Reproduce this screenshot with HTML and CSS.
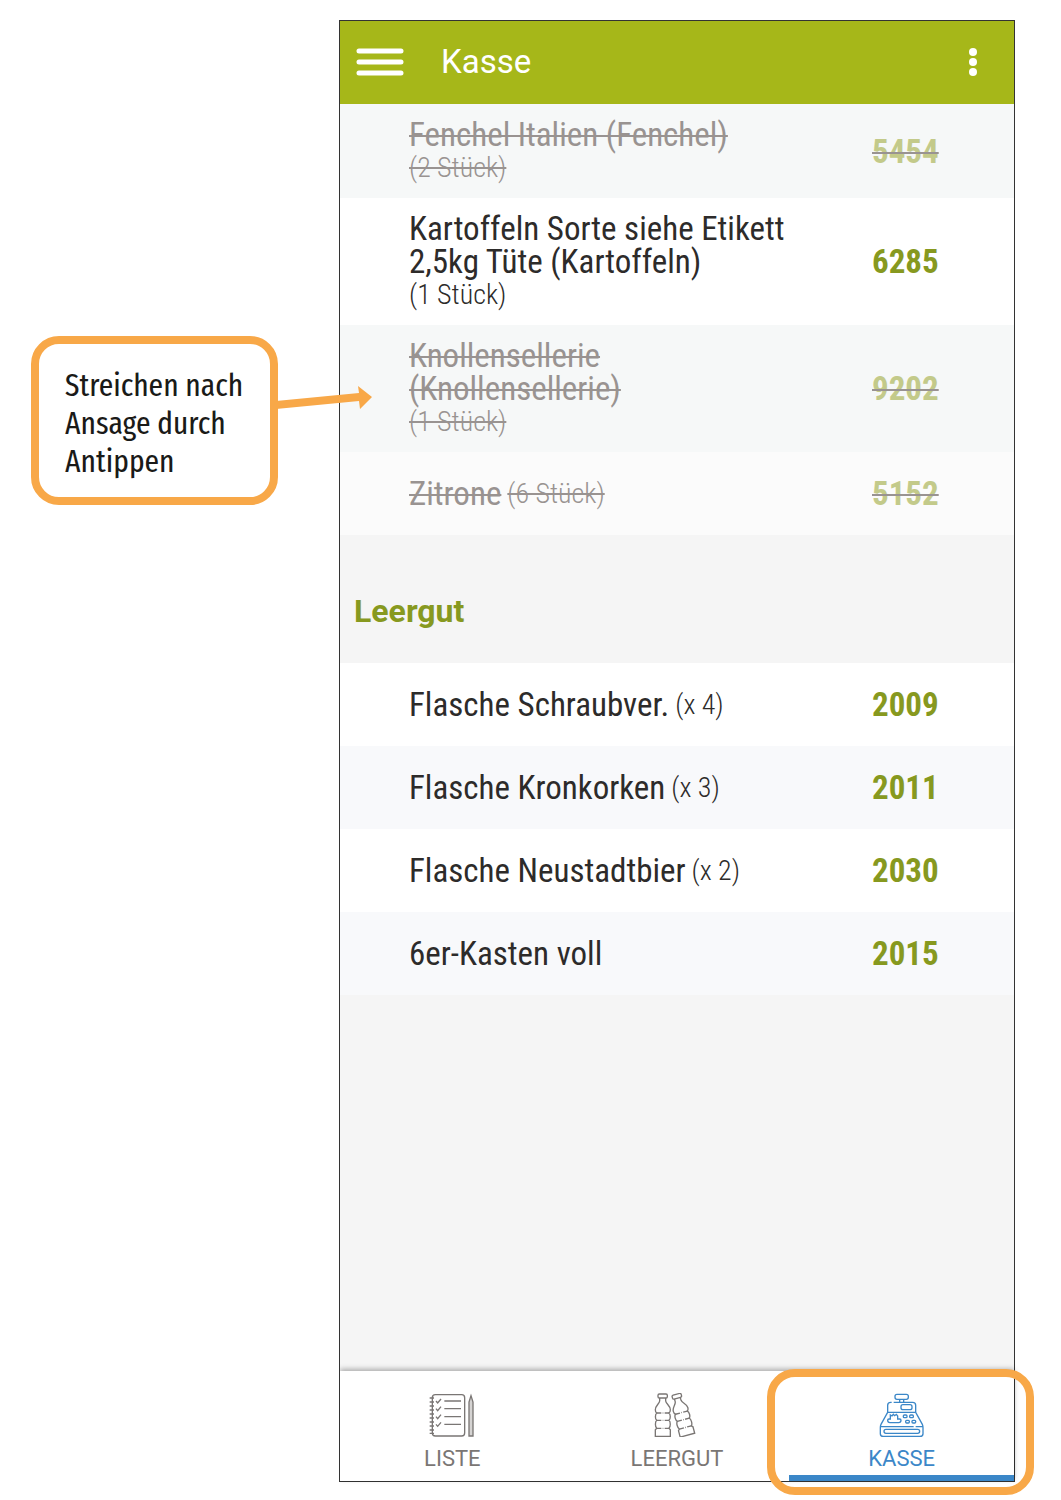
FILE: index.html
```html
<!DOCTYPE html>
<html lang="de">

<head>
    <meta charset="UTF-8">
    <meta name="viewport" content="width=device-width, initial-scale=1.0">
    <title>Kasse</title>
    <link rel="stylesheet" href="styles.css">
</head>

<body>

    <div class="page-container">

        <aside class="callout">
            Streichen nach Ansage durch Antippen
            <svg class="callout-arrow" viewBox="0 0 98 26" aria-hidden="true">
                <path d="M0 16 L83 8 L82 1 L96 12 L84 24 L83 16 L0 24 Z" />
            </svg>
        </aside>

        <div class="phone">
            <header class="app-bar">
                <button class="menu-button" type="button" aria-label="Menü">
                    <svg width="48" height="28" viewBox="0 0 48 28">
                        <path d="M3 3H45M3 14H45M3 25H45" />
                    </svg>
                </button>
                <h1>Kasse</h1>
                <button class="more-button" type="button" aria-label="Mehr">
                    <svg width="10" height="28" viewBox="0 0 10 28">
                        <circle cx="5" cy="4" r="4" />
                        <circle cx="5" cy="14" r="4" />
                        <circle cx="5" cy="24" r="4" />
                    </svg>
                </button>
            </header>

            <main class="content">
                <ul class="item-list">
                    <li class="item done">
                        <div class="item-text"><span>Fenchel Italien (Fenchel)</span> <small>(2 Stück)</small></div>
                        <span class="item-code">5454</span>
                    </li>
                    <li class="item">
                        <div class="item-text"><span>Kartoffeln Sorte siehe Etikett 2,5kg Tüte (Kartoffeln)</span> <small>(1 Stück)</small></div>
                        <span class="item-code">6285</span>
                    </li>
                    <li class="item done">
                        <div class="item-text"><span>Knollensellerie (Knollensellerie)</span> <small>(1 Stück)</small></div>
                        <span class="item-code">9202</span>
                    </li>
                    <li class="item done">
                        <div class="item-text"><span>Zitrone</span> <small>(6 Stück)</small></div>
                        <span class="item-code">5152</span>
                    </li>
                </ul>

                <h2>Leergut</h2>

                <ul class="item-list empties">
                    <li class="item">
                        <div class="item-text"><span>Flasche Schraubver.</span> <small>(x 4)</small></div>
                        <span class="item-code">2009</span>
                    </li>
                    <li class="item">
                        <div class="item-text"><span>Flasche Kronkorken</span> <small>(x 3)</small></div>
                        <span class="item-code">2011</span>
                    </li>
                    <li class="item">
                        <div class="item-text"><span>Flasche Neustadtbier</span> <small>(x 2)</small></div>
                        <span class="item-code">2030</span>
                    </li>
                    <li class="item">
                        <div class="item-text"><span>6er-Kasten voll</span></div>
                        <span class="item-code">2015</span>
                    </li>
                </ul>
            </main>

            <nav class="tab-bar">
                <a class="tab" href="#liste">
                    <svg viewBox="0 0 138 132" aria-hidden="true">
                        <rect x="10" y="5" width="97" height="124" rx="9" />
                        <path d="M2 15H15M2 27H15M2 39H15M2 51H15M2 63H15M2 75H15M2 87H15M2 99H15M2 111H15M2 121H15" />
                        <path d="M21 24L26 30L36 18M21 47L26 53L36 41M21 71L26 77L36 65M21 94L26 100L36 88" />
                        <path d="M46 24H96M46 47H96M46 71H96M46 94H96" />
                        <path class="pencil" d="M126 8L120 27V129H132V27Z" />
                    </svg>
                    LISTE
                </a>
                <a class="tab" href="#leergut">
                    <svg viewBox="0 0 138 132" aria-hidden="true">
                        <defs>
                            <g id="bottle">
                                <rect x="12" y="3" width="28" height="12" rx="4" />
                                <path d="M17 15V24C16 33 4 38 4 50C4 56 5 58 8 60C3 64 3 78 8 82C3 86 3 102 8 106L4 110V130H49V110L45 106C50 102 50 86 45 82C50 78 50 64 45 60C48 58 49 56 49 50C49 38 36 33 35 24V15" />
                                <path d="M8 60H22M26 60H28M32 60H45M8 82H22M26 82H28M32 82H45M8 106H22M26 106H28M32 106H45" />
                            </g>
                        </defs>
                        <use href="#bottle" />
                        <use href="#bottle" transform="translate(67 4) rotate(-15) translate(-26 -3)" />
                    </svg>
                    LEERGUT
                </a>
                <a class="tab active" href="#kasse">
                    <svg viewBox="0 0 138 132" aria-hidden="true">
                        <rect x="48" y="4" width="40" height="15" rx="6" />
                        <path d="M62 19V27M74 19V27" />
                        <path d="M38 28H35Q26 28 26 37V58L6 94Q4 98 4 104V122Q4 130 13 130H123Q132 130 132 122V104Q132 98 130 94L110 58V37Q110 28 101 28H44" />
                        <rect x="66" y="35" width="33" height="15" rx="6" />
                        <path d="M26 58H110M4 101H104M110 101H132" />
                        <path d="M34 78V66L39 69L43 64L47 68L52 64L56 69V78H62Q66 78 66 82Q66 89 59 89H33Q26 89 26 82Q26 78 30 78Z" />
                        <rect x="73" y="66" width="11" height="8" rx="3" />
                        <rect x="92" y="66" width="11" height="8" rx="3" />
                        <rect x="80" y="82" width="11" height="8" rx="3" />
                        <rect x="99" y="82" width="11" height="8" rx="3" />
                        <rect x="15" y="109" width="107" height="12" rx="6" />
                    </svg>
                    KASSE
                </a>
            </nav>
        </div>

    </div>

</body>

</html>
```
FILE: styles.css
```css
* {
    box-sizing: border-box;
}

body {
    margin: 0;
    background-color: white;
    font-family: "Roboto", "Liberation Sans", sans-serif;
}

.page-container {
    display: flex;
    align-items: flex-start;
    gap: 61px;
    min-height: 100vh;
    padding: 20px 46px 18px 31px;
}

/* note on the left */
.callout {
    position: relative;
    flex: 0 0 247px;
    margin-top: 316px;
    padding: 22px 24px 17px 26px;
    border: 8px solid #f8a848;
    border-radius: 28px;
    color: #1a1a18;
    font-family: "Fira Sans Extra Condensed", "Fira Sans Condensed", "Open Sans Condensed", "Roboto Condensed", sans-serif;
    font-size: 32px;
    line-height: 38px;
}

.callout-arrow {
    position: absolute;
    top: 41px;
    left: 237px;
    width: 98px;
    height: 26px;
    fill: #f8a848;
    z-index: 1;
}

.phone {
    flex: 1;
    align-self: stretch;
    display: flex;
    flex-direction: column;
    border: 1px solid #333;
    background-color: #f5f5f5;
}

.app-bar {
    display: flex;
    align-items: center;
    height: 83px;
    padding: 0 36px 2px 16px;
    background-color: #a6b719;
    color: white;
}

.app-bar h1 {
    flex: 1;
    margin: 0 0 0 37px;
    font-size: 33px;
    font-weight: 400;
}

.app-bar button {
    display: flex;
    padding: 0;
    border: 0;
    background: none;
}

.menu-button path {
    stroke: white;
    stroke-width: 5;
    stroke-linecap: round;
}

.more-button circle {
    fill: white;
}

.content {
    flex: 1;
}

.item-list {
    margin: 0;
    padding: 0;
    list-style: none;
    font-family: "Roboto Condensed", "Roboto", sans-serif;
}

.item {
    display: flex;
    align-items: center;
    justify-content: space-between;
    min-height: 83px;
    padding: 14px 0 14px 69px;
    background-color: white;
    color: #2d2b2a;
    font-size: 33px;
    line-height: 33px;
}

/* the amount drops to its own line when the name is long */
.item-text {
    flex: 0 1 394px;
    display: flex;
    flex-wrap: wrap;
    align-items: center;
    column-gap: 6px;
}

.item-text small {
    font-size: 28px;
    font-weight: 300;
}

.item-code {
    flex: 0 0 142px;
    color: #87991f;
    font-weight: 700;
}

.done {
    background-color: #fbfbfb;
    color: #999391;
    text-decoration: line-through;
    text-decoration-thickness: 2px;
}

.done:nth-child(odd) {
    background-color: #f6f8f8;
}

.done .item-code {
    color: #c3ca8a;
}

.empties .item:nth-child(even) {
    background-color: #f8f9fb;
}

h2 {
    margin: 0;
    padding: 56px 14px 32px;
    color: #87991f;
    font-size: 32px;
    line-height: 40px;
}

.tab-bar {
    display: flex;
    height: 110px;
    background-color: white;
    box-shadow: 0 -2px 5px rgba(0, 0, 0, 0.3);
    clip-path: inset(-8px -30px -30px 0);
}

.tab {
    position: relative;
    flex: 1;
    display: flex;
    flex-direction: column;
    align-items: center;
    padding-top: 22px;
    border-bottom: 6px solid transparent;
    color: #7a7674;
    font-size: 22px;
    line-height: 24px;
    text-decoration: none;
}

.tab svg {
    flex: none;
    width: 46px;
    height: 44px;
    margin-bottom: 10px;
    fill: none;
    stroke: currentColor;
    stroke-width: 4;
}

.tab .pencil {
    fill: #d5d3d2;
}

.active {
    border-bottom-color: #3b87c8;
    color: #3b87c8;
}

/* orange frame round the current tab */
.active::after {
    content: "";
    position: absolute;
    top: -2px;
    right: -20px;
    bottom: -20px;
    left: -22px;
    border: 8px solid #f8a848;
    border-radius: 28px;
}
```
